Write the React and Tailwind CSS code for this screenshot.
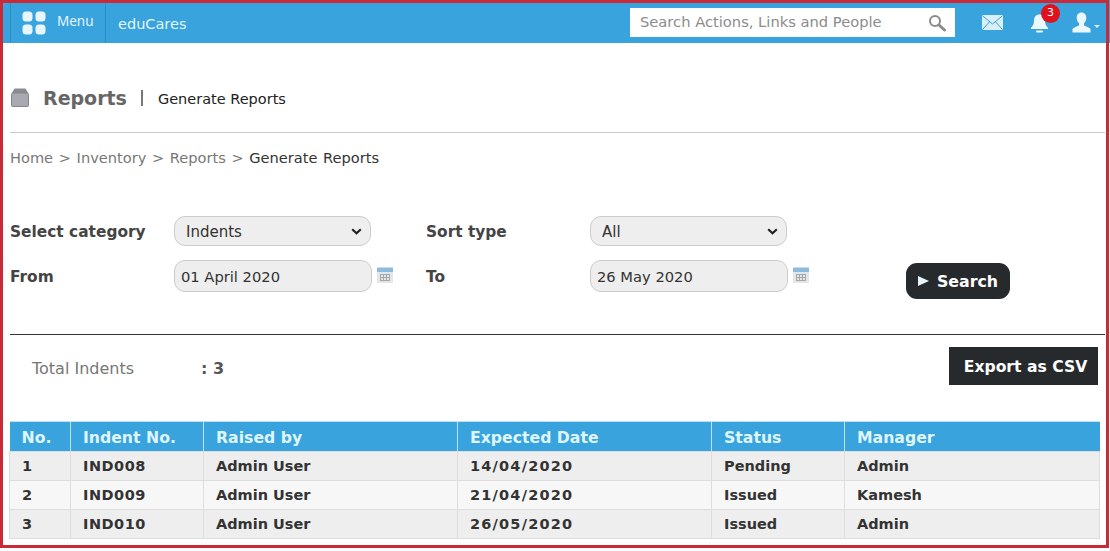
import React from "react";

const GridIcon = () => (
  <svg width="24" height="24" viewBox="0 0 24 24" fill="#e8f6fc">
    <rect x="0.5" y="0.5" width="10" height="10" rx="3.5" />
    <rect x="13.5" y="0.5" width="10" height="10" rx="3.5" />
    <rect x="0.5" y="13.5" width="10" height="10" rx="3.5" />
    <rect x="13.5" y="13.5" width="10" height="10" rx="3.5" />
  </svg>
);

const SearchIcon = () => (
  <svg width="18" height="18" viewBox="0 0 18 18" fill="none" stroke="#8a8a8a">
    <circle cx="7" cy="7" r="5" strokeWidth="2" />
    <path d="M11 11l5.5 5" strokeWidth="3" strokeLinecap="round" />
  </svg>
);

const MailIcon = () => (
  <svg width="21" height="15" viewBox="0 0 21 15">
    <rect x="0" y="0" width="21" height="15" rx="1" fill="#d9eff9" />
    <path d="M0.5 0.8L10.5 9L20.5 0.8M0.5 14.5L7.5 6.8M20.5 14.5L13.5 6.8" fill="none" stroke="#38a3dc" strokeWidth="1" />
  </svg>
);

const BellIcon = () => (
  <svg width="19" height="19" viewBox="0 0 19 19" fill="#eaf7fc">
    <path d="M9.5 0.5c-3.6 0-5.5 2.6-5.5 6 0 3.6-1.2 5.5-3 7.3v1.2h17v-1.2c-1.8-1.8-3-3.7-3-7.3 0-3.4-1.900-6-5.500-6z" />
    <rect x="6" y="16.500" width="7" height="2" rx="1" />
  </svg>
);

const UserIcon = () => (
  <svg width="19" height="21" viewBox="0 0 19 21" fill="#eaf7fc">
    <path d="M9.500 0.500c-3.100 0-4.800 2.300-4.800 5.300 0 2.300 0.900 4.300 2.300 5.500v2.200c-2.500 1.100-5.600 2.200-6.500 3.500v3.500h18v-3.500c-0.900-1.300-4-2.400-6.500-3.500v-2.200c1.400-1.200 2.300-3.200 2.300-5.500 0-3-1.700-5.300-4.800-5.300z" />
  </svg>
);

const Box = () => (
  <svg width="18" height="19" viewBox="0 0 18 19">
    <path d="M3.500 0.500h11l3 5h-17z" fill="#8b8b92" />
    <rect x="0.500" y="5" width="17" height="13.500" rx="1.500" fill="#a9a9b1" stroke="#85858c" />
  </svg>
);

const Calendar = () => (
  <svg className="mt-[7px]" width="16" height="16" viewBox="0 0 16 16">
    <rect x="0" y="0" width="16" height="16" fill="#e3e6ea" />
    <rect x="0" y="0" width="16" height="5" fill="#8dbbdc" />
    <path d="M0 0.500h16" stroke="#c5dcec" />
    <path d="M3.500 7v6.500M6.500 7v6.500M9.500 7v6.500M12.500 7v6.500M3 7.500h10M3 10.500h10M3 13.500h10" stroke="#a5a8ad" strokeWidth="1" fill="none" />
  </svg>
);

const Select = ({ value }) => (
  <div className="relative w-[197px] h-[30px]">
    <select className="appearance-none w-full h-full rounded-[11px] border border-[#ccc] bg-[#eee] text-[15px] text-[#333] pl-[11px] pt-[2px]" defaultValue={value}>
      <option>{value}</option>
    </select>
    <svg className="absolute left-[177px] top-[12px] pointer-events-none" width="11" height="7" viewBox="0 0 11 7" fill="none">
      <path d="M1.200 1.200L5.500 5.200L9.800 1.200" stroke="#222" strokeWidth="2.200" />
    </svg>
  </div>
);

const rows = [
  ["1", "IND008", "Admin User", "14/04/2020", "Pending", "Admin"],
  ["2", "IND009", "Admin User", "21/04/2020", "Issued", "Kamesh"],
  ["3", "IND010", "Admin User", "26/05/2020", "Issued", "Admin"],
];
const heads = ["No.", "Indent No.", "Raised by", "Expected Date", "Status", "Manager"];
const widths = ["w-[61px]", "w-[133px]", "w-[254px]", "w-[254px]", "w-[133px]", "w-[255px]"];
const tracks = ["", "tracking-[0.5px]", "", "tracking-[1.2px]", "", ""];

export default function App() {
  return (
    <div className="relative w-[1110px] h-[551px] overflow-hidden bg-white font-['DejaVu_Sans',sans-serif]">
      <header className="h-[43px] bg-[#38a3dc] flex items-stretch pt-[3px] pl-[10px] pr-[10px] text-[#e4f6fc]">
        <div className="w-[96px] border-x border-[#2a8cc4] flex items-center pl-[11px] gap-[11px]">
          <GridIcon />
          <span className="text-[13.500px] font-['Noto_Sans',sans-serif] -mt-[3px]">Menu</span>
        </div>
        <span className="ml-[12px] mt-[3px] self-center text-[14.5px]">eduCares</span>
        <div className="ml-auto flex items-center">
          <div className="w-[325px] h-[29px] bg-white flex items-center justify-between pl-[10px] pr-[9px] -mt-[1px]">
            <span className="text-[14.700px] text-[#8c8c8c]">Search Actions, Links and People</span>
            <SearchIcon />
          </div>
          <div className="ml-[27px] -mt-[2px] flex"><MailIcon /></div>
          <div className="relative ml-[27px] flex">
            <BellIcon />
            <span className="absolute left-[11px] -top-[10px] w-[19px] h-[19px] rounded-full bg-[#e0101c] text-white text-[11px] flex items-center justify-center">3</span>
          </div>
          <div className="ml-[23px] -mt-[2px] flex items-center">
            <UserIcon />
            <span className="ml-[3px] mt-[8px] w-0 h-0 border-x-[3px] border-x-transparent border-t-[3px] border-t-[#d9eff9]" />
          </div>
        </div>
      </header>

      <div className="pl-[10px] pr-[5px]">
        <div className="h-[90px] border-b border-[#ccc] flex items-center pt-[21px] pl-[1px]">
          <div className="-mt-[2px] flex"><Box /></div>
          <h1 className="ml-[14px] text-[19px] font-bold text-[#666]">Reports</h1>
          <span className="ml-[14px] w-[2px] h-[16px] bg-[#777]" />
          <span className="ml-[15px] text-[14.500px] text-[#222] mt-[4px]">Generate Reports</span>
        </div>

        <nav className="mt-[15px] h-[20px] text-[14.600px] text-[#777] flex items-center whitespace-pre [word-spacing:1px]">
          Home &gt; Inventory &gt; Reports &gt; <span className="text-[#333]">Generate Reports</span>
        </nav>

        <form className="mt-[48px] h-[119px] border-b border-[#333] grid grid-cols-[164px_252px_164px_316px_1fr] grid-rows-[30px_38px] gap-y-[15px] items-start content-start">
          <label className="text-[15.400px] font-bold text-[#444] leading-[32px]">Select category</label>
          <Select value="Indents" />
          <label className="text-[15.400px] font-bold text-[#444] leading-[32px]">Sort type</label>
          <Select value="All" />
          <span />

          <label className="text-[15.400px] font-bold text-[#444] leading-[32px]">From</label>
          <div className="flex items-start gap-[5px] -mt-[1px]">
            <input readOnly value="01 April 2020" className="w-[198px] h-[32px] rounded-[11px] border border-[#ccc] bg-[#eee] text-[14.700px] text-[#333] pl-[6px]" />
            <Calendar />
          </div>
          <label className="text-[15.400px] font-bold text-[#444] leading-[32px]">To</label>
          <div className="flex items-start gap-[5px] -mt-[1px]">
            <input readOnly value="26 May 2020" className="w-[198px] h-[32px] rounded-[11px] border border-[#ccc] bg-[#eee] text-[14.700px] text-[#333] pl-[6px]" />
            <Calendar />
          </div>
          <button type="button" className="w-[104px] h-[36px] rounded-[11px] bg-[#272a2c] text-white text-[15.800px] font-bold flex items-center justify-center gap-[8px] mt-[2px] pt-[2px]">
            <span className="w-0 h-0 -mt-[2px] border-y-[5.500px] border-y-transparent border-l-[11px] border-l-[#e8f4fa]" />
            Search
          </button>
        </form>

        <div className="mt-[12px] h-[38px] flex items-center pl-[22px] pr-[7px]">
          <span className="w-[169px] text-[16px] text-[#777] mt-[5px]">Total Indents</span>
          <span className="text-[16px] font-bold text-[#555] mt-[5px]">: 3</span>
          <button type="button" className="ml-auto w-[149px] h-[38px] bg-[#272a2c] text-white text-[15.600px] font-bold pt-[4px] pl-[4px]">Export as CSV</button>
        </div>

        <table className="mt-[36px] -ml-[1px] w-[1090px] table-fixed border-collapse text-[14.500px] font-bold">
          <thead>
            <tr className="h-[30px] bg-[#38a3dc] text-[#dff5fc]">
              {heads.map((h, i) => (
                <th key={h} className={`${widths[i]} text-[15.700px] font-bold text-left pl-[12px] pt-[3px] border-x border-t border-[#bfe2f3] first:border-l-0 last:border-r-0`}>{h}</th>
              ))}
            </tr>
          </thead>
          <tbody className="text-[#333]">
            {rows.map((r, ri) => (
              <tr key={r[0]} className={ri === 1 ? "h-[29px] bg-[#f7f7f7]" : "h-[29px] bg-[#eee]"}>
                {r.map((c, i) => (
                  <td key={i} className={`${tracks[i]} pl-[12px] pt-[1px] border border-[#ddd]`}>{c}</td>
                ))}
              </tr>
            ))}
          </tbody>
        </table>
      </div>

      <div className="absolute left-0 top-0 w-[1109px] h-[548px] border-[3px] border-[#c92a38] pointer-events-none" />
    </div>
  );
}
